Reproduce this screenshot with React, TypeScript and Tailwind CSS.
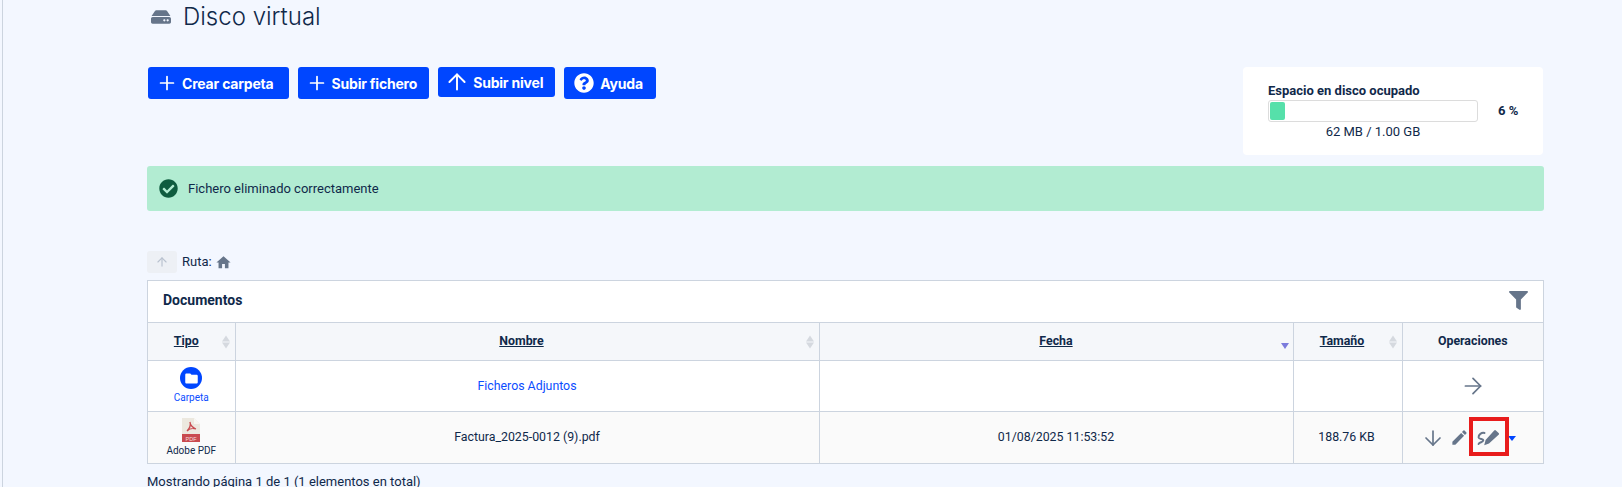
import { ArrowDown, ArrowRight, ArrowUp, Plus } from "lucide-react";
import { FaCheckCircle, FaFilter, FaHdd, FaQuestionCircle } from "react-icons/fa";
import { MdEdit, MdFolder, MdHome } from "react-icons/md";
import type { ReactNode } from "react";

const border = "border border-[#ccd4df]";

function ToolButton({ icon, label, className }: { icon: ReactNode; label: string; className: string }) {
  return (
    <button
      type="button"
      className={`flex items-center rounded-[3px] bg-[#0046ff] font-['Inter',sans-serif] text-[14px] font-bold tracking-[-0.2px] text-white ${className}`}
    >
      {icon}
      {label}
    </button>
  );
}

function SortArrows() {
  return (
    <span className="absolute right-[5px] top-1/2 flex -translate-y-1/2 flex-col gap-[1px]">
      <span className="h-0 w-0 border-x-[4px] border-b-[6px] border-x-transparent border-b-[#d5d9df]" />
      <span className="h-0 w-0 border-x-[4px] border-t-[6px] border-x-transparent border-t-[#d5d9df]" />
    </span>
  );
}

function PdfIcon() {
  return (
    <svg width="18" height="24" viewBox="0 0 18 24" className="mx-auto block">
      <path d="M0 0h12l6 6v13H0z" fill="#ece8df" />
      <path d="M12 0l6 6h-6z" fill="#f8f6f1" />
      <rect x="0" y="16" width="18" height="8" fill="#c94a4f" />
      <path
        d="M8 4c1 3 0 6-3 9m3-9c0 3 3 6 6 7-3-1-7 0-9 2"
        fill="none"
        stroke="#c94a4f"
        strokeWidth="1.3"
      />
      <text x="9" y="22.5" textAnchor="middle" fontSize="5.5" fill="#f3dcdc" fontFamily="'Liberation Sans', sans-serif">
        PDF
      </text>
    </svg>
  );
}

function SignatureIcon() {
  return (
    <svg width="22" height="16" viewBox="0 0 22 16" className="ml-[8px] shrink-0">
      <path d="M17.2.5a1.2 1.2 0 0 1 1.7 0l2.7 2.6a1.2 1.2 0 0 1 0 1.7l-9.6 8.6-4.8 1.8 1.4-5.2z" fill="currentColor" />
      <path
        d="M7.5 3C4.8 2.2 1.2 4.6 1.6 7.4c.4 2.2 5 1.2 4.6 3.2-.4 1.8-3.8 1.4-4.6 3.4"
        fill="none"
        stroke="currentColor"
        strokeWidth="2"
        strokeLinecap="round"
      />
    </svg>
  );
}

export default function App() {
  return (
    <div className="h-[487px] overflow-hidden bg-[#f3f7ff] font-['Roboto',sans-serif] text-[13px] text-[#10294a]">
      <div className="ml-[2px] h-full border-l border-[#ccd4df] pl-[144px]">
        <div className="w-[1397px]">
          <div className="flex h-[32px] items-center gap-[12px] pl-[4px] pt-[2px]">
            <FaHdd className="text-[20px] text-[#66758a]" />
            <h1 className="font-['Inter',sans-serif] text-[24px] font-light leading-none">Disco virtual</h1>
          </div>

          <div className="mt-[35px] flex items-start justify-between">
            <div className="flex items-start gap-[9px] pl-[1px]">
              <ToolButton
                icon={<Plus size={22} strokeWidth={1.9} />}
                label="Crear carpeta"
                className="h-[32px] gap-[4px] pl-[8px] pr-[15px]"
              />
              <ToolButton
                icon={<Plus size={22} strokeWidth={1.9} />}
                label="Subir fichero"
                className="h-[32px] gap-[4px] pl-[8px] pr-[12px]"
              />
              <ToolButton
                icon={<ArrowUp size={26} strokeWidth={1.8} />}
                label="Subir nivel"
                className="h-[30px] gap-[3px] pl-[6px] pr-[12px]"
              />
              <ToolButton
                icon={<FaQuestionCircle size={20} />}
                label="Ayuda"
                className="h-[32px] gap-[6px] pl-[10px] pr-[13px]"
              />
            </div>
            <div className="mr-[1px] h-[88px] w-[300px] rounded-[4px] bg-white pl-[25px] pt-[15px]">
              <div className="text-[13px] font-bold leading-[18px]">Espacio en disco ocupado</div>
              <div className="flex items-center">
                <div className="h-[22px] w-[210px] rounded-[3px] border border-[#dcdcdc] bg-white p-[1px]">
                  <div className="h-full w-[15px] rounded-[2px] bg-[#56e0aa]" />
                </div>
                <span className="ml-[20px] font-bold">6 %</span>
              </div>
              <div className="w-[210px] text-center leading-[19px]">62 MB / 1.00 GB</div>
            </div>
          </div>

          <div className="mt-[11px] flex h-[45px] items-center gap-[10px] rounded-[3px] bg-[#b2ecd2] pl-[12px]">
            <FaCheckCircle size={19} className="text-[#0f5c3f]" />
            <span>Fichero eliminado correctamente</span>
          </div>

          <div className="mt-[40px] flex h-[22px] items-center">
            <span className="flex h-[22px] w-[30px] items-center justify-center rounded-[3px] bg-[#edf0f5] text-[#b9c2cf]">
              <ArrowUp size={14} />
            </span>
            <span className="ml-[5px]">Ruta:</span>
            <MdHome size={17} className="ml-[3px] text-[#66758a]" />
          </div>

          <div className={`mt-[7px] bg-white ${border} border-b-0`}>
            <div className="flex h-[41px] items-center justify-between pb-[2px] pl-[15px] pr-[15px]">
              <span className="text-[14px] font-bold">Documentos</span>
              <FaFilter size={19} className="text-[#66758a]" />
            </div>
            <table className="w-full table-fixed border-collapse text-center text-[12.35px]">
              <colgroup>
                <col className="w-[87px]" />
                <col className="w-[584px]" />
                <col className="w-[474px]" />
                <col className="w-[109px]" />
                <col />
              </colgroup>
              <thead>
                <tr className="h-[38px] bg-[#f5f7fa] font-bold">
                  <th className={`${border} border-l-0 relative pr-[10px]`}>
                    <span className="underline">Tipo</span>
                    <SortArrows />
                  </th>
                  <th className={`${border} relative pr-[11px]`}>
                    <span className="underline">Nombre</span>
                    <SortArrows />
                  </th>
                  <th className={`${border} relative`}>
                    <span className="underline">Fecha</span>
                    <span className="absolute bottom-[11px] right-[4px] h-0 w-0 border-x-[4px] border-t-[6px] border-x-transparent border-t-[#7b7bdc]" />
                  </th>
                  <th className={`${border} relative pr-[11px]`}>
                    <span className="underline">Tamaño</span>
                    <SortArrows />
                  </th>
                  <th className={`${border} border-r-0`}>Operaciones</th>
                </tr>
              </thead>
              <tbody>
                <tr className="h-[51px] bg-white">
                  <td className={`${border} border-l-0 text-[#0b4dff]`}>
                    <span className="mx-auto flex h-[22px] w-[22px] items-center justify-center rounded-full bg-[#0046ff]">
                      <MdFolder size={15} className="text-white" />
                    </span>
                    <div className="mt-[2px] text-[10px] leading-[14px]">Carpeta</div>
                  </td>
                  <td className={`${border} text-[#0b4dff]`}>Ficheros Adjuntos</td>
                  <td className={border} />
                  <td className={border} />
                  <td className={`${border} border-r-0`}>
                    <ArrowRight size={26} strokeWidth={1.6} className="mx-auto text-[#66758a]" />
                  </td>
                </tr>
                <tr className="h-[52px] bg-[#fafafa]">
                  <td className={`${border} border-l-0`}>
                    <PdfIcon />
                    <div className="mt-[2px] text-[10px] leading-[14px]">Adobe PDF</div>
                  </td>
                  <td className={border}>Factura_2025-0012 (9).pdf</td>
                  <td className={border}>01/08/2025 11:53:52</td>
                  <td className={`${border} pr-[2px]`}>188.76 KB</td>
                  <td className={`${border} border-r-0`}>
                    <div className="relative flex h-[24px] items-center pl-[18px] text-[#66758a]">
                      <ArrowDown size={24} strokeWidth={1.7} className="shrink-0" />
                      <MdEdit size={19} className="ml-[5px] shrink-0" />
                      <SignatureIcon />
                      <span className="ml-[9px] mt-[1px] h-0 w-0 shrink-0 border-x-[4px] border-t-[5px] border-x-transparent border-t-[#0046ff]" />
                      <span className="absolute left-[66px] top-[-9px] h-[39px] w-[40px] border-[4px] border-[#e81c1c]" />
                    </div>
                  </td>
                </tr>
              </tbody>
            </table>
          </div>

          <p className="mt-[8px]">Mostrando página 1 de 1 (1 elementos en total)</p>
        </div>
      </div>
    </div>
  );
}
